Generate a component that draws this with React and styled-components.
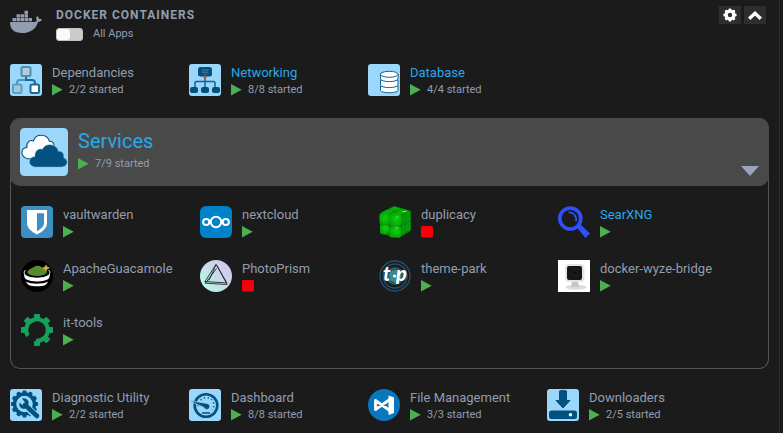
import React, { useState } from 'react';

import styled, { createGlobalStyle, ThemeProvider } from 'styled-components';

//#region styled-components

const GlobalStyle = createGlobalStyle`
    * {
        box-sizing: border-box;
    }
    body {
        margin: 0;
        background-color: #1b1b1b;
        font-family: Roboto, "Noto Sans", sans-serif;
        color: ${(props) => props.theme.TEXT_COLOR};
    }
    svg {
        display: block;
        flex-shrink: 0;
    }
`;

const Page = styled.main`
    display: flex;
    flex-direction: column;
    min-height: 100vh;
    margin-right: 3px;
    padding: 6px 10px 12px;
    border-right: 1px solid #2a2a2a;
`;

const Header = styled.header`
    display: flex;
    align-items: flex-start;
    gap: 14px;
    height: 58px;
`;

const HeaderTitle = styled.div`
    flex: 1;
`;

const Title = styled.h1`
    margin: 0;
    font-size: 12px;
    line-height: 18px;
    font-weight: 700;
    letter-spacing: 1px;
    text-transform: uppercase;
`;

const SwitchLabel = styled.label`
    display: flex;
    align-items: center;
    gap: 10px;
    margin-top: 2px;
    font-size: 11px;
    line-height: 16px;
    cursor: pointer;
`;

const SwitchInput = styled.input`
    appearance: none;
    display: flex;
    justify-content: flex-start;
    width: 27px;
    height: 13px;
    margin: 0;
    background-color: #cbcbcb;
    border: 1px solid #c4c4c4;
    border-radius: 3px;
    cursor: pointer;

    &::before {
        content: '';
        width: 13px;
        height: 11px;
        background-color: #fafafa;
        border-radius: 3px;
    }
    &:checked {
        justify-content: flex-end;
        background-color: #4caf50;
    }
`;

const Toolbar = styled.div`
    display: flex;
    gap: 3px;
    padding-right: 3px;
`;

const ToolButton = styled.button`
    display: flex;
    justify-content: center;
    align-items: center;
    width: 22px;
    height: 18px;
    padding: 0;
    background-color: #2e2e2e;
    border: none;
    cursor: pointer;
`;

const TileGrid = styled.div`
    display: grid;
    grid-template-columns: repeat(auto-fill, 179px);
    row-gap: 22px;
`;

const Tile = styled.div`
    display: flex;
    align-items: flex-start;
    gap: 10px;
    height: 32px;
    white-space: nowrap;
`;

const Name = styled.div`
    font-size: ${(props) => (props.$large ? '20px' : '13px')};
    line-height: ${(props) => (props.$large ? '27px' : '17px')};
    color: ${(props) => (props.$linked ? props.theme.LINK_COLOR : props.theme.TEXT_COLOR)};

    a {
        color: inherit;
        text-decoration: none;
    }
`;

const StatusRow = styled.div`
    display: flex;
    align-items: center;
    gap: 6px;
    height: 17px;
    font-size: 11px;
    line-height: 18px;
`;

const Folder = styled.section`
    display: flex;
    flex-direction: column;
    margin: 22px 0 20px;
    border: 1px solid #555;
    border-top: none;
    border-radius: 10px;
`;

const FolderHeader = styled.div`
    display: flex;
    align-items: flex-start;
    gap: 10px;
    height: 68px;
    margin: 0 -1px;
    padding: 10px;
    background-color: #494949;
    border-radius: 10px;
`;

const FolderText = styled.div`
    flex: 1;
`;

const FolderToggle = styled.button`
    align-self: flex-end;
    padding: 0;
    background: none;
    border: none;
    cursor: pointer;
`;

const FolderBody = styled.div`
    padding: 20px 10px 22px;
`;

//#endregion

const theme = {
    TEXT_COLOR: '#929db0',
    LINK_COLOR: '#29a8ec',
};

const PALE = '#9bd7fa';
const NAVY = '#02517f';

const Icon = ({ size = 32, children }) => (
    <svg width={size} height={size} viewBox="0 0 32 32" aria-hidden="true">
        {children}
    </svg>
);

const PaleTile = ({ size, children }) => (
    <Icon size={size}>
        <rect width="32" height="32" rx="3" fill={PALE} />
        {children}
    </Icon>
);

// n teeth around (cx, cy), each reaching from the centre out to r
const Teeth = ({ n, cx, cy, r, w, h, fill, skip = [] }) =>
    Array.from({ length: n }, (_, i) => i)
        .filter((i) => !skip.includes(i))
        .map((i) => <rect key={i} x={cx - w / 2} y={cy - r} width={w} height={h} rx="1" fill={fill} transform={`rotate(${(360 / n) * i} ${cx} ${cy})`} />);

const DockerLogo = () => (
    <svg width="32" height="28" viewBox="0 0 32 28" fill="#929db0" aria-hidden="true">
        <path d="M0 16h24.6c1.2 0 2-.5 2.2-1.2-.8-1.5-.7-3.3.3-4.8 1.4.8 2 1.9 2 3 1.1-.2 2.2 0 2.9.6-.6 1.6-2 2.300-4 2.300C26.300 22.500 20.500 27 12 27 4 27 0 23.500 0 16z" />
        <path d="M2.500 12h3.500v3.300H2.500zM6.500 12h3.500v3.300H6.500zM10.500 12h3.500v3.300h-3.500zM14.500 12h3.500v3.300h-3.500zM18.500 12H22v3.300h-3.500zM6.500 8.300h3.500v3.300H6.500zM10.500 8.300h3.500v3.300h-3.500zM14.500 8.300h3.500v3.300h-3.500zM14.500 4.800h3.500v3.100h-3.500z" />
    </svg>
);

const GearIcon = () => (
    <svg width="14" height="14" viewBox="0 0 14 14" aria-hidden="true">
        <Teeth n={8} cx={7} cy={7} r={6.6} w={3} h={3} fill="#fff" />
        <circle cx="7" cy="7" r="3.800" fill="none" stroke="#fff" strokeWidth="3.200" />
    </svg>
);

const ChevronUpIcon = () => (
    <svg width="14" height="14" viewBox="0 0 14 14" aria-hidden="true">
        <path d="m1.200 10.800 5.800-5.600 5.800 5.600" fill="none" stroke="#fff" strokeWidth="3.300" />
    </svg>
);

const PlayIcon = () => (
    <svg width="11" height="12" viewBox="0 0 11 12" role="img" aria-label="started">
        <path d="M0 0 10.700 5.800 0 11.600z" fill="#4caf50" />
    </svg>
);

const StopIcon = () => (
    <svg width="12" height="12" viewBox="0 0 12 12" role="img" aria-label="stopped">
        <rect width="12" height="11.600" rx="1.500" fill="#f5000b" />
    </svg>
);

const DependanciesIcon = () => (
    <PaleTile>
        <path d="M16 12v4M7 20v-1q0-3 3-3h6" fill="none" stroke="#4b93bd" strokeWidth="2" />
        <path d="M16 13v3h6q3 0 3 3v2" fill="none" stroke="#1d6998" strokeWidth="2" />
        <rect x="11.500" y="3" width="9" height="9" rx="1.500" fill="#b5cbd7" stroke="#4b8db3" strokeWidth="2" />
        <rect x="3" y="20.500" width="8.500" height="8.500" rx="1.500" fill="#a6c7da" stroke="#5b9fc4" strokeWidth="2" />
        <rect x="20.500" y="20.500" width="8.500" height="8.500" rx="1.500" fill="#fff" stroke="#1d6998" strokeWidth="2" />
    </PaleTile>
);

const NetworkingIcon = () => (
    <PaleTile>
        <path d="M16 13v11M6 24v-5q0-1.500 1.500-1.500h17q1.500 0 1.500 1.500v5" fill="none" stroke="#176291" strokeWidth="1.500" />
        <rect x="9" y="3" width="14" height="9.500" rx="2.500" fill={NAVY} />
        <path d="M13 6h6M13 8.200h6" stroke="#5796bb" strokeWidth=".800" />
        <path d="M14.500 10.500h3" stroke="#a36153" strokeWidth=".700" />
        <path d="M14 12.500h4l-1 2h-2z" fill="#d94d2d" />
        <rect x="1" y="23" width="8" height="6" rx="2" fill={NAVY} />
        <rect x="12" y="23" width="8" height="6" rx="2" fill={NAVY} />
        <rect x="23" y="23" width="8" height="6" rx="2" fill={NAVY} />
    </PaleTile>
);

const DatabaseIcon = () => (
    <PaleTile>
        <g fill="#fff" stroke="#126393" strokeWidth="1">
            <path d="M12.500 22v4.500C14 29.500 28.500 29.500 30 26.500V22z" />
            <path d="M12.500 16v5C14 24.500 28.500 24.500 30 21v-5z" />
            <path d="M12.500 10v5C14 18.500 28.500 18.500 30 15v-5z" />
            <ellipse cx="21.200" cy="10.300" rx="8.800" ry="3" />
        </g>
    </PaleTile>
);

const CloudsIcon = () => (
    <PaleTile size={48}>
        <path d="M5 20.500C0 19 .2 13.500 4.500 13c-.4-3.500 2-5.200 4.500-4.400 1.500-5 9-5 10.500.2 3-.3 4 3 2.500 5.700L11 20.500z" fill="#fff" stroke={NAVY} strokeWidth=".700" />
        <path d="M11 26c-6 0-6-6.500-1-7-.2-4 2.400-5.600 5-4.800 2-5 10-3.300 10.500 1.300 3-.3 4 2 3.600 4.500C32.500 20.500 32.300 26 27.500 26z" fill={NAVY} stroke="#6abbe6" strokeWidth=".300" />
    </PaleTile>
);

const VaultIcon = () => (
    <Icon>
        <rect width="32" height="32" rx="4" fill="#3b8fc3" />
        <path d="M6 4h20v13c0 5-4 8.500-10 11.500C10 25.500 6 22 6 17z" fill="#fff" />
        <path d="M16 7.300h7V17c0 3.300-2.500 5.500-7 8.200z" fill="#3b8fc3" />
    </Icon>
);

const NextcloudIcon = () => (
    <Icon>
        <rect width="32" height="32" rx="6" fill="#0082c9" />
        <g fill="none" stroke="#fff" strokeWidth="2">
            <circle cx="16" cy="16" r="5.200" />
            <circle cx="6.200" cy="16" r="3.100" />
            <circle cx="25.800" cy="16" r="3.100" />
        </g>
    </Icon>
);

const DuplicacyIcon = () => (
    <Icon>
        <defs>
            <radialGradient id="cube" cx=".6" cy=".4" r=".7">
                <stop offset="0" stopColor="#10cf10" />
                <stop offset=".6" stopColor="#08b408" />
                <stop offset="1" stopColor="#069a06" />
            </radialGradient>
        </defs>
        <path d="M1 7.500 15 .5 31 5l.5 19.500L20 31.500 2 27.500z" fill="#067f06" stroke="#067f06" strokeLinejoin="round" />
        <g fill="#07b007">
            <path d="M2 7 8.500 3.500q2 0 7 1.500L9.500 8.500zM10 3 15.500.8l7 1.700L17 5zM17 6l6-3 7 2-7 3.500zM10.500 8.500 16 6l6.500 2-6 2z" />
        </g>
        <rect x=".5" y="7.500" width="9.500" height="11" rx="2.500" fill="url(#cube)" />
        <rect x="10" y="8" width="12.500" height="12" rx="3" fill="url(#cube)" />
        <rect x="1" y="18.500" width="9" height="9.500" rx="2.500" fill="url(#cube)" />
        <rect x="10" y="20.200" width="12" height="11.300" rx="3" fill="url(#cube)" />
        <path d="M22.500 10.500 26.500 7.500v9.500l-4 2.500zM27 7l4.500-2.500V14L27 16.500zM22.500 20.500 26.500 18v8.500l-4 3zM27 17.500l4.500-2.500v8.500L27 26z" fill="#089a08" />
        <path d="M17.500 11.500 19 10.800M17 22l1.500-.5M24 5.500h3" stroke="#75e875" strokeLinecap="round" />
    </Icon>
);

const SearchIcon = () => (
    <Icon>
        <circle cx="12.300" cy="12.500" r="10.500" fill="none" stroke="#3050ff" strokeWidth="3.600" />
        <path d="M10.500 6.500c5-.5 8.500 3.500 7.500 9" fill="none" stroke="#3050ff" strokeWidth="1.700" />
        <path d="m18.500 21 3.500-3 10 9.500-4.500 4.500z" fill="#3050ff" />
    </Icon>
);

const GuacamoleIcon = () => (
    <Icon>
        <circle cx="16" cy="16" r="16" fill="#000" />
        <path d="M4.500 10C2 12 3 15.500 8 17.300M27.500 10c2.500 2 1.500 5.500-3.500 7.300" fill="none" stroke="#fff" />
        <path d="M3 13.500c1.500 5.500 24.500 5.500 26 0C29 17 28 18.500 26.500 19.500c-5 2.500-16 2.500-21 0C4 18.500 3 17 3 13.500z" fill="#fff" />
        <path d="M5 21.500c5 3 17 3 22 0-.8 2-1.800 3-3 3.700-4 1.500-12 1.500-16 0-1.200-.7-2.200-1.700-3-3.700z" fill="#fff" />
        <path d="M6.500 13C6 10 10 8.500 12 7.500c3-2.500 7-2 9 0 3 1.500 6 3 4.500 5.500-3 4-16 4-19 0z" fill="#568c31" />
        <path d="m25 5 1 2 2.500 1-2.500 1-1 2-1-2-2.500-1 2.500-1z" fill="#e9b13a" stroke="#e9b13a" strokeWidth=".600" />
    </Icon>
);

const PrismIcon = () => (
    <Icon>
        <defs>
            <linearGradient id="prism" x1=".1" y1=".9" x2=".9" y2=".2">
                <stop offset="0" stopColor="#b8fbe3" />
                <stop offset=".5" stopColor="#c5dfe8" />
                <stop offset="1" stopColor="#d6c5ed" />
            </linearGradient>
        </defs>
        <circle cx="16" cy="16" r="16" fill="url(#prism)" />
        <path d="M16 4.500 5 21.500l22 1.500zM16 4.500 9 20.500M5 21.500l.5 1.700 21.500 1.300V23M5.500 23.200 16.500 8.500M17 5.500l9 17" fill="none" stroke="#24282b" strokeWidth=".900" />
    </Icon>
);

const ThemeParkIcon = () => (
    <Icon>
        <g fill="none" stroke="#24506e" strokeWidth="1.400">
            <circle cx="16" cy="16" r="15" />
            <circle cx="16" cy="16" r="12" />
        </g>
        <circle cx="16" cy="16" r="9" fill="#285b67" />
        <circle cx="16" cy="16" r="6" fill="#39898d" />
        <text x="4" y="21" fontFamily="Lato, sans-serif" fontSize="20" fontWeight="900" fontStyle="italic" fill="#fff">
            t
        </text>
        <circle cx="15.500" cy="16" r="1.600" fill="#fff" />
        <text x="17" y="21" fontFamily="Lato, sans-serif" fontSize="20" fontWeight="900" fontStyle="italic" fill="#fff">
            p
        </text>
    </Icon>
);

const CameraIcon = () => (
    <Icon>
        <rect width="32" height="32" fill="#fff" />
        <ellipse cx="18" cy="27.300" rx="10.500" ry="2.500" fill="#dedcda" />
        <path d="M14 21h6l1 6h-8z" fill="#c9c6c3" />
        <rect x="7" y="4" width="19.500" height="18" rx="4" fill="#e5e5e4" />
        <rect x="9" y="6" width="15" height="14" rx="2" fill="#151617" />
        <circle cx="16.500" cy="13.500" r="2.700" fill="#090a0b" stroke="#2b2e30" strokeWidth=".700" />
        <circle cx="16.500" cy="14" r=".600" fill="#555" />
    </Icon>
);

const ItToolsIcon = () => (
    <Icon>
        <path d="M7 22A10.800 10.800 0 1 1 15 26.800" fill="none" stroke="#16a05a" strokeWidth="4.200" />
        <Teeth n={8} cx={16} cy={16} r={16} w={6} h={5} fill="#16a05a" skip={[5]} />
        <path d="M0 29 12 17l3 3L4 32H0z" fill="#1b1b1b" />
    </Icon>
);

const DiagnosticIcon = () => (
    <PaleTile>
        <Teeth n={12} cx={14.5} cy={15} r={13.5} w={4} h={5} fill={NAVY} />
        <circle cx="14.500" cy="15" r="10" fill="none" stroke={NAVY} strokeWidth="3.500" />
        <path d="m16 17 11 11" stroke={PALE} strokeWidth="7" strokeLinecap="round" />
        <path d="m15 16 12 11" stroke={NAVY} strokeWidth="4.500" strokeLinecap="round" />
        <path d="M12 9.500c4-1.200 7.500 2 6.500 6l-4 4.500c-4 0-6-3.500-5-6.500l3 2.800 2.800-2.600z" fill={NAVY} />
    </PaleTile>
);

const DashboardIcon = () => (
    <PaleTile>
        <circle cx="17" cy="16.500" r="11.300" fill="none" stroke={NAVY} strokeWidth="2.600" />
        <path d="M10 14.500A7.500 7.500 0 1 1 23 21" fill="none" stroke={NAVY} strokeWidth="1.500" strokeDasharray="1.200 2.600" />
        <path d="M0 11.500 18 14.500a3 3 0 1 1-3 4z" fill={NAVY} stroke={PALE} strokeWidth=".700" />
        <path d="M8 16.500h2" stroke="#e25b4c" strokeWidth="1.500" />
        <path d="M13 24h8" stroke={NAVY} strokeWidth="1.500" />
    </PaleTile>
);

const FileManagementIcon = () => (
    <Icon>
        <circle cx="16" cy="16" r="16" fill="#0877bd" />
        <path d="m7.500 11.500 15 10.500V10L7.500 20.500z" fill="none" stroke="#fff" strokeWidth="2.800" strokeLinejoin="round" />
        <path d="m20.500 6.500 5.500 2v15.500l-5.500 2z" fill="#fff" />
    </Icon>
);

const DownloadersIcon = () => (
    <PaleTile>
        <path d="M12.500 2q3.500-1.500 7 0v9.500H23L16 19 9 11.500h3.500z" fill={NAVY} stroke={NAVY} strokeLinejoin="round" />
        <rect x="2" y="21.500" width="28" height="8.500" rx="2.500" fill={NAVY} />
        <circle cx="23.500" cy="25.700" r="1.700" fill="#fff" />
    </PaleTile>
);

const topFolders = [
    { name: 'Dependancies', icon: DependanciesIcon, count: '2/2' },
    { name: 'Networking', icon: NetworkingIcon, count: '8/8', linked: true },
    { name: 'Database', icon: DatabaseIcon, count: '4/4', linked: true },
];

const services = [
    { name: 'vaultwarden', icon: VaultIcon },
    { name: 'nextcloud', icon: NextcloudIcon },
    { name: 'duplicacy', icon: DuplicacyIcon, stopped: true },
    { name: 'SearXNG', icon: SearchIcon, linked: true },
    { name: 'ApacheGuacamole', icon: GuacamoleIcon },
    { name: 'PhotoPrism', icon: PrismIcon, stopped: true },
    { name: 'theme-park', icon: ThemeParkIcon },
    { name: 'docker-wyze-bridge', icon: CameraIcon },
    { name: 'it-tools', icon: ItToolsIcon },
];

const bottomFolders = [
    { name: 'Diagnostic Utility', icon: DiagnosticIcon, count: '2/2' },
    { name: 'Dashboard', icon: DashboardIcon, count: '8/8' },
    { name: 'File Management', icon: FileManagementIcon, count: '3/3' },
    { name: 'Downloaders', icon: DownloadersIcon, count: '2/5' },
];

const Status = ({ count, stopped }) => (
    <StatusRow>
        {stopped ? <StopIcon /> : <PlayIcon />}
        {count && <span>{count} started</span>}
    </StatusRow>
);

const Tiles = ({ items }) => (
    <TileGrid>
        {items.map(({ name, icon: TileIcon, count, stopped, linked }) => (
            <Tile key={name}>
                <TileIcon />
                <div>
                    <Name $linked={linked}>{linked ? <a href={`#${name}`}>{name}</a> : name}</Name>
                    <Status count={count} stopped={stopped} />
                </div>
            </Tile>
        ))}
    </TileGrid>
);

const App = () => {
    const [allApps, setAllApps] = useState(false);
    const [collapsed, setCollapsed] = useState(false);
    const [open, setOpen] = useState(true);

    return (
        <ThemeProvider theme={theme}>
            <GlobalStyle />
            <Page>
                <Header>
                    <DockerLogo />
                    <HeaderTitle>
                        <Title>Docker Containers</Title>
                        <SwitchLabel htmlFor="all-apps">
                            <SwitchInput id="all-apps" type="checkbox" checked={allApps} onChange={(e) => setAllApps(e.target.checked)} />
                            All Apps
                        </SwitchLabel>
                    </HeaderTitle>
                    <Toolbar>
                        <ToolButton type="button" aria-label="Settings">
                            <GearIcon />
                        </ToolButton>
                        <ToolButton type="button" aria-label="Collapse" onClick={() => setCollapsed(!collapsed)}>
                            <ChevronUpIcon />
                        </ToolButton>
                    </Toolbar>
                </Header>
                {!collapsed && (
                    <>
                        <Tiles items={topFolders} />
                        <Folder>
                            <FolderHeader>
                                <CloudsIcon />
                                <FolderText>
                                    <Name $large $linked>
                                        <a href="#Services">Services</a>
                                    </Name>
                                    <Status count="7/9" />
                                </FolderText>
                                <FolderToggle type="button" aria-label="Toggle Services" onClick={() => setOpen(!open)}>
                                    <svg width="18" height="10" viewBox="0 0 18 10" aria-hidden="true">
                                        <path d="M0 0h18L9 10z" fill="#99a5bb" />
                                    </svg>
                                </FolderToggle>
                            </FolderHeader>
                            {open && (
                                <FolderBody>
                                    <Tiles items={services} />
                                </FolderBody>
                            )}
                        </Folder>
                        <Tiles items={bottomFolders} />
                    </>
                )}
            </Page>
        </ThemeProvider>
    );
};

export default App;
